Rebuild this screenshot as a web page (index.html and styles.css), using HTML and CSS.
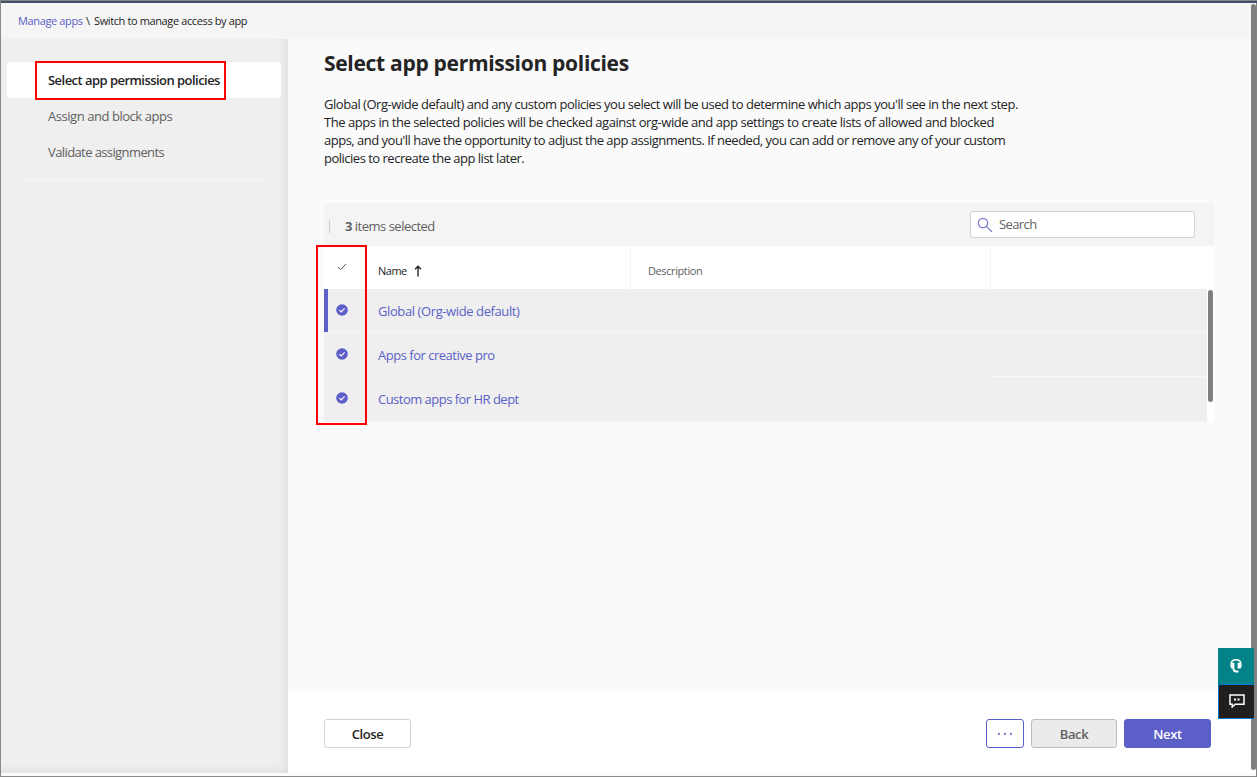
FILE: index.html
```html
<!DOCTYPE html>
<html lang="en">
<head>
<meta charset="utf-8">
<title>Select app permission policies</title>
<link rel="stylesheet" href="styles.css">
</head>
<body>
<div class="window">
  <header class="breadcrumb"><a class="crumb-link">Manage apps</a><span class="crumb-sep">\</span><span class="crumb-current">Switch to manage access by app</span></header>
  <div class="body">
    <nav class="sidebar">
      <div class="step step-active"><span>Select app permission policies</span></div>
      <div class="step"><span>Assign and block apps</span></div>
      <div class="step step-last"><span>Validate assignments</span></div>
      <div class="divider"></div>
    </nav>
    <div class="content">
      <main class="main">
        <h1 class="title">Select app permission policies</h1>
        <p class="intro"><span class="l1">Global (Org-wide default) and any custom policies you select will be used to determine which apps you'll see in the next step.</span><br><span class="l2">The apps in the selected policies will be checked against org-wide and app settings to create lists of allowed and blocked</span><br><span class="l3">apps, and you'll have the opportunity to adjust the app assignments. If needed, you can add or remove any of your custom</span><br><span class="l4">policies to recreate the app list later.</span></p>
        <section class="table">
          <div class="toolbar">
            <span class="bar"></span>
            <span class="selected"><b>3</b> items selected</span>
            <div class="search">
              <svg width="16" height="16" viewBox="0 0 16 16" fill="none" stroke="#7b78cf" stroke-width="1.2"><circle cx="6" cy="6" r="4.7"/><path d="M9.4 9.4l5.6 5.4"/></svg>
              <span>Search</span>
            </div>
          </div>
          <div class="thead">
            <div class="cell-check"><svg width="10" height="8" viewBox="0 0 10 8" fill="none" stroke="#555" stroke-width="1"><path d="M1 4.2l2.6 2.3L9 1"/></svg></div>
            <div class="cell-name"><span class="name-label">Name</span><svg width="8" height="12" viewBox="0 0 8 12" fill="none" stroke="#242424" stroke-width="1.4"><path d="M4 11.5V1.3M1 4.2L4 1.2l3 3"/></svg></div>
            <div class="cell-desc"><span>Description</span></div>
            <div class="cell-rest"></div>
          </div>
          <div class="tbody">
            <div class="rows">
              <div class="row row-first"><div class="cell-check"><svg class="tick" width="12" height="12" viewBox="0 0 12 12"><circle cx="6" cy="6" r="5.8" fill="#5b5fc7"/><path d="M3.4 6.2l1.8 1.7 3.4-3.6" fill="none" stroke="#fff" stroke-width="1.1"/></svg></div><a>Global (Org-wide default)</a></div>
              <div class="row row-second"><div class="cell-check"><svg class="tick" width="12" height="12" viewBox="0 0 12 12"><circle cx="6" cy="6" r="5.8" fill="#5b5fc7"/><path d="M3.4 6.2l1.8 1.7 3.4-3.6" fill="none" stroke="#fff" stroke-width="1.1"/></svg></div><a>Apps for creative pro</a></div>
              <div class="row row-third"><div class="cell-check"><svg class="tick" width="12" height="12" viewBox="0 0 12 12"><circle cx="6" cy="6" r="5.8" fill="#5b5fc7"/><path d="M3.4 6.2l1.8 1.7 3.4-3.6" fill="none" stroke="#fff" stroke-width="1.1"/></svg></div><a>Custom apps for HR dept</a></div>
            </div>
            <div class="track"><div class="thumb"></div></div>
          </div>
        </section>
      </main>
      <footer class="footer">
        <button class="btn btn-close">Close</button>
        <button class="btn btn-more"><svg width="16" height="4" viewBox="0 0 16 4" fill="#5b5fc7"><rect x="1" y="1" width="1.8" height="1.8"/><rect x="7" y="1" width="1.8" height="1.8"/><rect x="13" y="1" width="1.8" height="1.8"/></svg></button>
        <button class="btn btn-back">Back</button>
        <button class="btn btn-next">Next</button>
      </footer>
    </div>
  </div>
</div>
<div class="page-thumb"></div>
<div class="page-edge"></div>
<div class="mark mark-step"></div>
<div class="mark mark-checks"></div>
<div class="help">
  <div class="help-agent"><svg width="14" height="16" viewBox="0 0 14 16" fill="none" stroke="#fff"><path d="M3.400 10.300C1.900 8.800 1.900 7 2.100 5.500 2.500 3 4.500 1.800 7 1.800s4.500 1.200 4.900 3.700c.2 1.500.2 3.300-1.300 4.800" stroke-width="1.500"/><path d="M4.200 4.800v5.700M9.800 4.800v5.700" stroke-width="2.300"/><path d="M4.500 10.500c0 2 1 2.900 2.900 2.900h2" stroke-width="2"/></svg></div>
  <div class="help-chat"><svg width="16" height="14" viewBox="0 0 16 14"><path d="M1 1h14v9.300H6.200L3.200 13v-2.700H1z" fill="none" stroke="#fff" stroke-width="1.500"/><path d="M5 4.500h2v2H5zM8.500 4.500h2v2h-2z" fill="#fff"/></svg></div>
</div>
</body>
</html>
```
FILE: styles.css
```css
* { box-sizing: border-box; }
body { margin: 0; width: 1257px; height: 777px; overflow: hidden; position: relative; background: #fafafa; color: #242424; font: 13px/18px "Open Sans", "Noto Sans", sans-serif; white-space: nowrap; }
.window { width: 1257px; height: 777px; display: flex; flex-direction: column; border-left: 1px solid #8a8a8a; border-top: 1px solid #858585; border-bottom: 1px solid #8a8a8a; padding-bottom: 3px; }
.breadcrumb { height: 38px; flex: none; border-top: 2px solid #3d5269; background: #f5f5f5; padding-left: 17px; display: flex; align-items: center; font-size: 11px; }
.crumb-link { width: 65px; color: #5b5fc7; letter-spacing: -0.36px; }
.crumb-sep { width: 11px; padding-left: 3px; }
.crumb-current { letter-spacing: -0.38px; }
.body { flex: 1; display: flex; min-height: 0; }
.sidebar { width: 287px; flex: none; background: #efefef; padding: 23px 7px 0 6px; box-shadow: inset -7px -7px 8px -5px #dcdcdc; }
.step { height: 36px; padding-left: 41px; display: flex; align-items: center; color: #616161; letter-spacing: -0.45px; }
.step-active { background: #fff; border-radius: 3px; color: #242424; font-weight: 600; letter-spacing: -0.54px; }
.step-last { letter-spacing: -0.6px; }
.divider { height: 1px; margin: 9px 18px 0; background: #f7f7f7; }
.content { flex: 1; display: flex; flex-direction: column; background: #fafafa; }
.main { height: 653px; padding: 9px 0 0 36px; }
.title { margin: 0; font-size: 21px; line-height: 30px; font-weight: 700; letter-spacing: -0.3px; }
.intro { margin: 17px 0 0; }
.l1 { letter-spacing: -0.468px; }
.l2 { letter-spacing: -0.45px; }
.l3 { letter-spacing: -0.5px; }
.l4 { letter-spacing: -0.5px; }
.table { width: 890px; margin-top: 36px; }
.toolbar { height: 43px; background: #f4f4f4; border-radius: 3px 3px 0 0; display: flex; align-items: center; padding: 0 19px 0 5px; }
.bar { width: 1px; height: 13px; background: #c4d0c8; margin-top: 4px; }
.selected { margin: 3px 0 0 15px; color: #616161; letter-spacing: -0.5px; }
.search { margin-left: auto; width: 225px; height: 27px; border: 1px solid #d1d1d1; border-radius: 3px; background: #fff; display: flex; align-items: center; padding-left: 6px; gap: 6px; color: #616161; letter-spacing: -0.6px; }
.search span { margin-top: -2px; }
.thead { height: 43px; display: flex; background: #fff; font-size: 11px; }
.cell-check { width: 36px; display: flex; justify-content: center; align-items: center; }
.thead .cell-check { height: 41px; }
.cell-name { width: 271px; padding: 7px 0 0 18px; border-right: 1px solid #f0f0f0; display: flex; align-items: center; gap: 7px; font-weight: 500; letter-spacing: -0.5px; }
.cell-desc { width: 360px; padding: 7px 0 0 17px; border-right: 1px solid #f0f0f0; display: flex; align-items: center; color: #616161; letter-spacing: -0.4px; }
.tbody { display: flex; height: 133px; background: #fff; border-radius: 0 0 3px 3px; }
.rows { width: 883px; background: #efefef; border-radius: 0 0 0 3px; border-bottom: 1px solid #f3f3f3; }
.row { height: 44px; padding-bottom: 2px; display: flex; align-items: center; color: #5b5fc7; }
.row-first { padding-bottom: 1px; letter-spacing: -0.4px; background: linear-gradient(#5b5fc7, #5b5fc7) 0 0 / 4px 43px no-repeat; border-bottom: 1px solid #f6f6f6; }
.row-second { letter-spacing: -0.49px; background: linear-gradient(#f6f6f6, #f6f6f6) 666px 43px / 217px 1px no-repeat; }
.row-third { letter-spacing: -0.52px; }
.row .cell-check { width: 36px; margin-right: 18px; }
.row a { padding-top: 2px; }
.track { width: 7px; padding: 1px 1px 0; }
.thumb { height: 112px; border-radius: 3px; background: #7f7f7f; }
.footer { flex: 1; background: #fff; padding: 27px 46px 0 36px; display: flex; align-items: flex-start; }
.btn { height: 29px; border-radius: 3px; padding: 0; margin: 0; border: 1px solid #d1d1d1; background: #fff; color: #242424; font: 600 13px/18px "Open Sans", sans-serif; letter-spacing: -0.4px; display: flex; justify-content: center; align-items: center; }
.btn-close { width: 87px; margin-right: auto; }
.btn-more { width: 38px; border-color: #5b5fc7; }
.btn-back { width: 86px; margin-left: 7px; background: #ebebeb; border-color: #bdbdbd; color: #616161; }
.btn-next { width: 87px; margin-left: 7px; background: #5b5fc7; border-color: #5b5fc7; color: #fff; }
.page-thumb { position: absolute; left: 1251px; top: 4px; width: 5px; height: 766px; background: #808080; border-radius: 3px; }
.page-edge { position: absolute; left: 1256px; top: 3px; width: 1px; height: 774px; background: #858585; }
.mark { position: absolute; border: 2px solid #ff0000; }
.mark-step { left: 35px; top: 61px; width: 191px; height: 39px; }
.mark-checks { left: 316px; top: 245px; width: 51px; height: 180px; }
.help { position: absolute; left: 1218px; top: 648px; width: 36px; }
.help-agent { height: 36px; background: #038387; display: flex; align-items: center; justify-content: center; }
.help-chat { height: 35px; background: #201f1e; border: 1px solid #0078d4; border-right: 0; display: flex; align-items: center; justify-content: center; padding-bottom: 2px; }
```
